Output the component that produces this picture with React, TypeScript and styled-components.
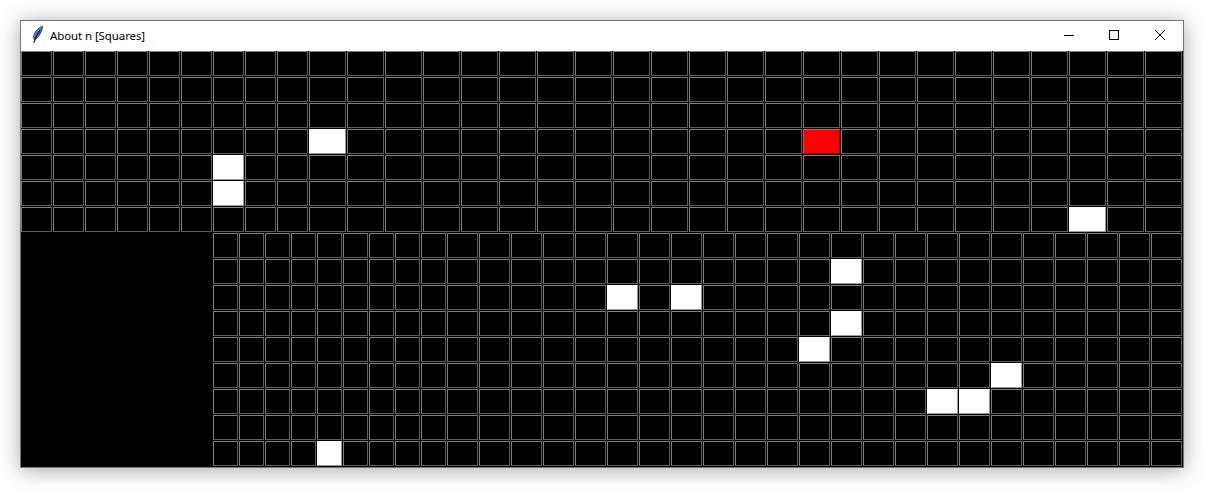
import React from 'react';
import styled, { createGlobalStyle } from 'styled-components';

const GlobalStyle = createGlobalStyle`
    html, body {
        margin: 0;
        background-color: #ffffff;
    }
    body {
        height: 497px;
        overflow: hidden;
    }
`;

const Page = styled.div`
    padding: 20px;
`;

const Window = styled.div`
    width: 1162px;
    border: 1px solid #777777;
    background-color: #ffffff;
    box-shadow: 0 2px 20px rgba(0, 0, 0, 0.35);
`;

const TitleBar = styled.div`
    display: flex;
    align-items: center;
    height: 30px;
    padding-left: 11px;
    background-color: #ffffff;
`;

const AppIcon = styled.svg`
    width: 12px;
    height: 18px;
    margin-right: 6px;
    margin-bottom: 2px;
`;

const Title = styled.span`
    flex: 1;
    font-family: "Noto Sans", sans-serif;
    font-size: 11.5px;
    letter-spacing: -0.1px;
    color: #000000;
    padding-bottom: 1px;
`;

const Control = styled.div`
    display: flex;
    justify-content: center;
    align-items: center;
    width: 46px;
    height: 28px;
    padding-bottom: 2px;
`;

const Board = styled.div`
    display: flex;
    flex-direction: column;
    background-color: #000000;
`;

const CellGrid = styled.div<{ $narrow: number; $wide: number }>`
    display: grid;
    grid-template-columns: repeat(9, ${({ $narrow }) => $narrow}px) repeat(23, ${({ $wide }) => $wide}px);
    grid-auto-rows: 26px;
    background-color: #000000;
`;

const LowerRow = styled.div`
    display: flex;
`;

const Blank = styled.div`
    width: 192px;
    background-color: #000000;
`;

type CellKind = 'off' | 'on' | 'hit';

const cellColors: Record<CellKind, { fill: string; lit: string; shade: string }> = {
    off: { fill: '#000000', lit: '#808080', shade: '#5e5e5e' },
    on: { fill: '#ffffff', lit: '#ffffff', shade: '#9a9a9a' },
    hit: { fill: '#ff0000', lit: '#e05050', shade: '#8a1010' },
};

const Cell = styled.div<{ $kind: CellKind }>`
    box-sizing: border-box;
    margin: 0 1px 1px 0;
    background-color: ${({ $kind }) => cellColors[$kind].fill};
    border-style: solid;
    border-width: 1px;
    border-top-color: ${({ $kind }) => cellColors[$kind].lit};
    border-left-color: ${({ $kind }) => cellColors[$kind].lit};
    border-right-color: ${({ $kind }) => cellColors[$kind].shade};
    border-bottom-color: ${({ $kind }) => cellColors[$kind].shade};
`;

const COLUMNS = 32;

function Cells({ rows, on, hit }: { rows: number; on: string[]; hit?: string }) {
    const cells = [];
    for (let row = 0; row < rows; row++) {
        for (let col = 0; col < COLUMNS; col++) {
            const key = `${row}:${col}`;
            const kind: CellKind = key === hit ? 'hit' : on.includes(key) ? 'on' : 'off';
            cells.push(<Cell key={key} $kind={kind} />);
        }
    }
    return <>{cells}</>;
}

function FeatherIcon() {
    return (
        <AppIcon viewBox="0 0 12 18">
            <path d="M10.4 0.4 C7 1.4 3.4 4.6 2.2 8.4 C1.6 10.2 1.6 12 2.2 13.6 C4.6 12.8 6.6 10.6 8 8 C9.4 5.4 10.4 3 10.4 0.4 Z" fill="#4f94e0" stroke="#14263c" strokeWidth="0.9" />
            <path d="M7 5 L4.4 7.6 M8 6 L5.2 9.8" fill="none" stroke="#1f4f8c" strokeWidth="0.8" />
            <path d="M8.4 3.4 C6 6.8 3.6 10.6 1.8 16.8" fill="none" stroke="#0a1626" strokeWidth="1.1" />
        </AppIcon>
    );
}

function App() {
    return (
        <Page>
            <GlobalStyle />
            <Window>
                <TitleBar>
                    <FeatherIcon />
                    <Title>About n [Squares]</Title>
                    <Control>
                        <svg width="12" height="10" viewBox="0 0 12 10">
                            <line x1="2" y1="5.5" x2="12" y2="5.5" stroke="#000" strokeWidth="1" />
                        </svg>
                    </Control>
                    <Control>
                        <svg width="10" height="10" viewBox="0 0 10 10">
                            <rect x="0.5" y="0.5" width="9" height="9" fill="none" stroke="#000" strokeWidth="1" />
                        </svg>
                    </Control>
                    <Control>
                        <svg width="10" height="10" viewBox="0 0 10 10">
                            <path d="M0 0 L10 10 M10 0 L0 10" fill="none" stroke="#000" strokeWidth="1" />
                        </svg>
                    </Control>
                </TitleBar>
                <Board>
                    <CellGrid $narrow={32} $wide={38}>
                        <Cells rows={7} on={['3:9', '4:6', '5:6', '6:29']} hit="3:22" />
                    </CellGrid>
                    <LowerRow>
                        <Blank />
                        <CellGrid $narrow={26} $wide={32}>
                            <Cells rows={9} on={['1:21', '2:14', '2:16', '3:21', '4:20', '5:26', '6:24', '6:25', '8:4']} />
                        </CellGrid>
                    </LowerRow>
                </Board>
            </Window>
        </Page>
    );
}

export default App;
